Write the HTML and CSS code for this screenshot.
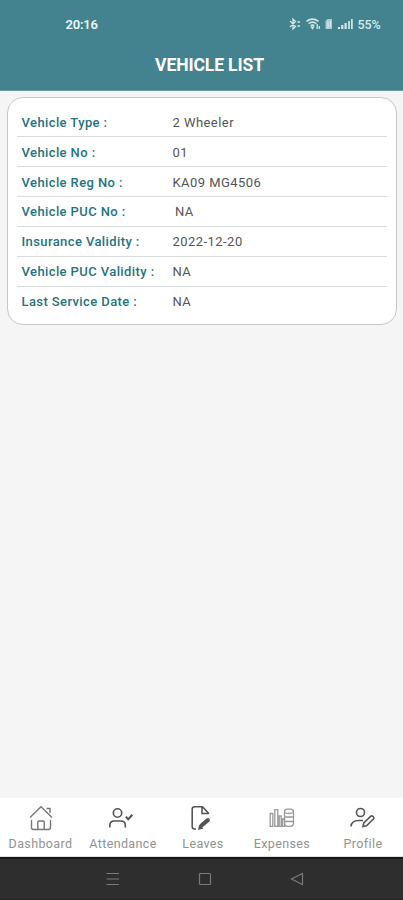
FILE: index.html
```
<!DOCTYPE html>
<html lang="en">
<head>
<meta charset="utf-8">
<title>Vehicle List</title>
<link rel="stylesheet" href="styles.css">
</head>
<body>
<div class="screen">
  <header class="header">
    <div class="status">
      <span class="clock">20:16</span>
      <div class="status-right">
        <svg class="status-icons" width="65" height="16" viewBox="0 0 65 16" fill="none" stroke="#d3e7ea" stroke-width="1.3">
          <path d="M1 5l5.500 5.500-2.500 2.500V3L6.500 5.500 1 11M8.500 6h2.500M8.500 10h2.500"/>
          <path d="M17.500 5.400q6-4.600 12 0M19.600 7.600q3.900-2.800 7.800 0M21.700 9.800q1.800-1.200 3.600 0" stroke-width="1.700"/>
          <path d="M22.500 11.200h2l-1 1.500zM28.200 8v5M30.300 10v3"/>
          <path d="M36.500 5l2-2h4.500v10h-6.500z" fill="#a9cbd1" stroke="none"/>
          <path d="M39 6v6M41.500 5v6"/>
          <path d="M50 11v2M53.300 9v4M56.600 7v6" stroke-width="2.200"/><path d="M60 5v8M62.900 3v10" stroke-width="1.700"/>
        </svg>
        <span class="battery">55%</span>
      </div>
    </div>
    <h1 class="title">VEHICLE LIST</h1>
  </header>
  <main class="content">
    <dl class="card">
      <div class="row"><dt>Vehicle Type :</dt><dd>2 Wheeler</dd></div>
      <div class="row"><dt>Vehicle No :</dt><dd>01</dd></div>
      <div class="row"><dt>Vehicle Reg No :</dt><dd>KA09 MG4506</dd></div>
      <div class="row"><dt>Vehicle PUC No :</dt><dd class="indent">NA</dd></div>
      <div class="row"><dt>Insurance Validity :</dt><dd>2022-12-20</dd></div>
      <div class="row"><dt>Vehicle PUC Validity :</dt><dd>NA</dd></div>
      <div class="row"><dt>Last Service Date :</dt><dd>NA</dd></div>
    </dl>
  </main>
  <nav class="tabs">
    <a class="tab">
      <svg class="icon" viewBox="0 0 36 30"><path d="M7 14.500L18 3.800l11 10.700M23.500 5.500h3.500v4.500M8.500 17V24.500q0 2 2 2h2.500M23 26.500h2.500q2 0 2-2V17M14.800 26.500V19q0-1 1-1h4.400q1 0 1 1v7.500M13 26.500h10"/></svg>
      <span>Dashboard</span>
    </a>
    <a class="tab">
      <svg class="icon dark" viewBox="0 0 36 30"><circle cx="12.500" cy="10" r="4.200"/><path d="M4.800 24.500v-2q0-4.500 4.500-4.500h6.500q4.500 0 4.500 4.500v2"/><path d="M20.800 13.800l2.400 2.400 4.200-4.400" stroke-width="2"/></svg>
      <span>Attendance</span>
    </a>
    <a class="tab">
      <svg class="icon dark" viewBox="0 0 36 30"><path d="M11 26H9.700q-2.500 0-2.500-2.500V6.300Q7.200 3.800 9.700 3.800h7.800l6.500 7M17 4v6.500h6.800"/><path d="M16.500 22.500l6.300-5.300" stroke-width="4.200" stroke-linecap="round"/><path d="M13 27l1.200-5.300 4.300 3.700z" fill="#555" stroke="none"/></svg>
      <span>Leaves</span>
    </a>
    <a class="tab">
      <svg class="icon light" viewBox="0 0 36 30"><path d="M6.200 10.500h2.600v12.800H6.200zM10.800 6.700h3v16.600h-3zM15.200 13h2v10.300h-2zM18.500 16h2v7.300h-2z"/><rect x="20.500" y="6.200" width="9" height="17.100" rx="3"/><path d="M20.500 9.500q4.500 2 9 0M20.500 14h9M20.500 18.500h9"/></svg>
      <span>Expenses</span>
    </a>
    <a class="tab">
      <svg class="icon dark" viewBox="0 0 36 30"><circle cx="15.500" cy="9.500" r="4"/><path d="M6 23.500q.5-6 7.500-6h4.500M18 23.500l.8-3.500 7-6.800q1-.8 2 .1l.7.700q.9 1-.1 2l-6.900 6.700z"/></svg>
      <span>Profile</span>
    </a>
  </nav>
  <footer class="system">
    <svg width="14" height="14" viewBox="0 0 14 14"><path d="M.500 1.500h12.500M.500 7h12.500M.500 12.500h12.500"/></svg>
    <svg width="14" height="14" viewBox="0 0 14 14"><rect x="1.500" y="1.500" width="11" height="11" rx="1"/></svg>
    <svg width="14" height="14" viewBox="0 0 14 14"><path d="M12.500 1.500v11L1.500 7z"/></svg>
  </footer>
</div>
</body>
</html>
```
FILE: styles.css
```
* { box-sizing: border-box; }
body { margin: 0; font-family: Roboto, "Liberation Sans", sans-serif; }
.screen { width: 403px; height: 900px; display: flex; flex-direction: column; background: #f5f5f5; }
.header { height: 91px; background: #42838f; border-bottom: 1px solid #699ca6; color: #fff; }
.status { height: 48px; padding: 0 22.500px 0 65.500px; display: flex; align-items: center; justify-content: space-between; }
.clock { font-size: 13px; font-weight: 600; letter-spacing: -.2px; color: #eef7f8; }
.status-right { display: flex; align-items: center; gap: 3px; }
.battery { font-size: 12.500px; font-weight: 500; letter-spacing: -.1px; color: #d8eaed; }
.title { margin: 0; padding-left: 16px; line-height: 34px; text-align: center; font-size: 17.500px; font-weight: 700; letter-spacing: -.1px; }
.content { flex: 1; padding: 6px 6px 0 7px; }
.card { margin: 0; height: 228px; padding: 9.500px 9px 0; background: #fff; border: 1px solid #c4c8c8; border-radius: 16px; }
.row { height: 29.850px; padding: 1px 0 0 4.500px; display: flex; align-items: center; border-bottom: 1px solid #d8dcdc; font-size: 13px; }
.row:last-child { border-bottom: 0; padding-top: 0; }
dt { width: 151px; font-weight: 500; letter-spacing: .4px; color: #26747f; white-space: nowrap; }
dd { margin: 0; letter-spacing: .45px; color: #555; }
.indent { padding-left: 2.500px; }
.tabs { height: 59px; padding-top: 5px; display: grid; grid-template-columns: 81px 84px 76px 82px 80px; background: #fff; border-bottom: 1px solid #ddd; }
.tab { display: flex; flex-direction: column; align-items: center; font-size: 12.500px; letter-spacing: .37px; line-height: 21px; color: #929292; }
.icon { width: 36px; height: 30px; fill: none; stroke: #777; stroke-width: 1.400; }
.icon.dark { stroke: #555; stroke-width: 1.600; }
.icon.light { stroke: #999; stroke-width: 1.300; }
.system { height: 43px; padding: 0 99px 0 106px; display: flex; align-items: center; justify-content: space-between; background: #2e2e2e; border-top: 2px solid #171717; border-bottom: 1px solid #222; }
.system svg { fill: none; stroke: #7a7a7a; stroke-width: 1.200; }
```
